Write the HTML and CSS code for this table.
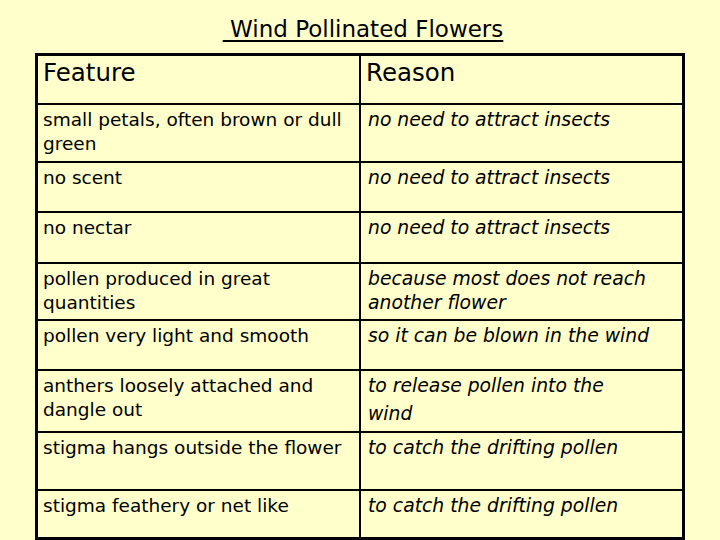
FILE: index.html
```html
<!DOCTYPE html>
<html lang="en">
<head>
<meta charset="utf-8">
<title>Wind Pollinated Flowers</title>
<link rel="stylesheet" href="styles.css">
</head>
<body>
<div class="slide">
  <h1 class="title"><span class="title-text">&nbsp;Wind Pollinated Flowers</span></h1>
  <div class="table">
    <div class="cell head h-head">Feature</div>
    <div class="cell head h-head">Reason</div>

    <div class="cell feat">small petals, often brown or dull green</div>
    <div class="cell reason">no need to attract insects</div>

    <div class="cell feat">no scent</div>
    <div class="cell reason">no need to attract insects</div>

    <div class="cell feat">no nectar</div>
    <div class="cell reason">no need to attract insects</div>

    <div class="cell feat">pollen produced in great quantities</div>
    <div class="cell reason">because most does not reach another flower</div>

    <div class="cell feat">pollen very light and smooth</div>
    <div class="cell reason">so it can be blown in the wind</div>

    <div class="cell feat">anthers loosely attached and dangle out</div>
    <div class="cell reason loose">to release pollen into the<br>wind</div>

    <div class="cell feat">stigma hangs outside the flower</div>
    <div class="cell reason">to catch the drifting pollen</div>

    <div class="cell feat">stigma feathery or net like</div>
    <div class="cell reason">to catch the drifting pollen</div>
  </div>
</div>
</body>
</html>
```
FILE: styles.css
```css
html, body {
  margin: 0;
  padding: 0;
  background: #ffffcc;
}
body {
  width: 720px;
  height: 540px;
  overflow: hidden;
  font-family: "DejaVu Sans", "Noto Sans", sans-serif;
  color: #000;
}
.slide {
  display: flex;
  flex-direction: column;
  padding-left: 35px;
}
.title {
  margin: 0;
  height: 53px;
  width: 650px;
  display: flex;
  justify-content: center;
  align-items: flex-start;
  font-weight: normal;
  font-size: 23px;
  line-height: 26px;
  padding-top: 16px;
  box-sizing: border-box;
}
.title-text {
  text-decoration: underline;
  text-decoration-thickness: 2px;
  text-underline-offset: 3px;
  margin-left: 6px;
}
.table {
  width: 650px;
  box-sizing: border-box;
  border: 3px solid #000;
  background: #000;
  display: grid;
  grid-template-columns: 321px 321px;
  grid-template-rows: 47px 56px 48px 49px 55px 48px 60px 56px 46px;
  gap: 2px;
}
.cell {
  background: #ffffcc;
  font-size: 18.5px;
  line-height: 24px;
  padding: 3px 4px 0 5px;
  overflow: hidden;
}
.reason {
  font-style: italic;
  font-size: 18.8px;
  padding-left: 7px;
}
.reason.loose {
  line-height: 28px;
  padding-top: 1px;
}
.head {
  font-size: 24.5px;
  line-height: 30px;
  padding-top: 2px;
  font-style: normal;
}
```
